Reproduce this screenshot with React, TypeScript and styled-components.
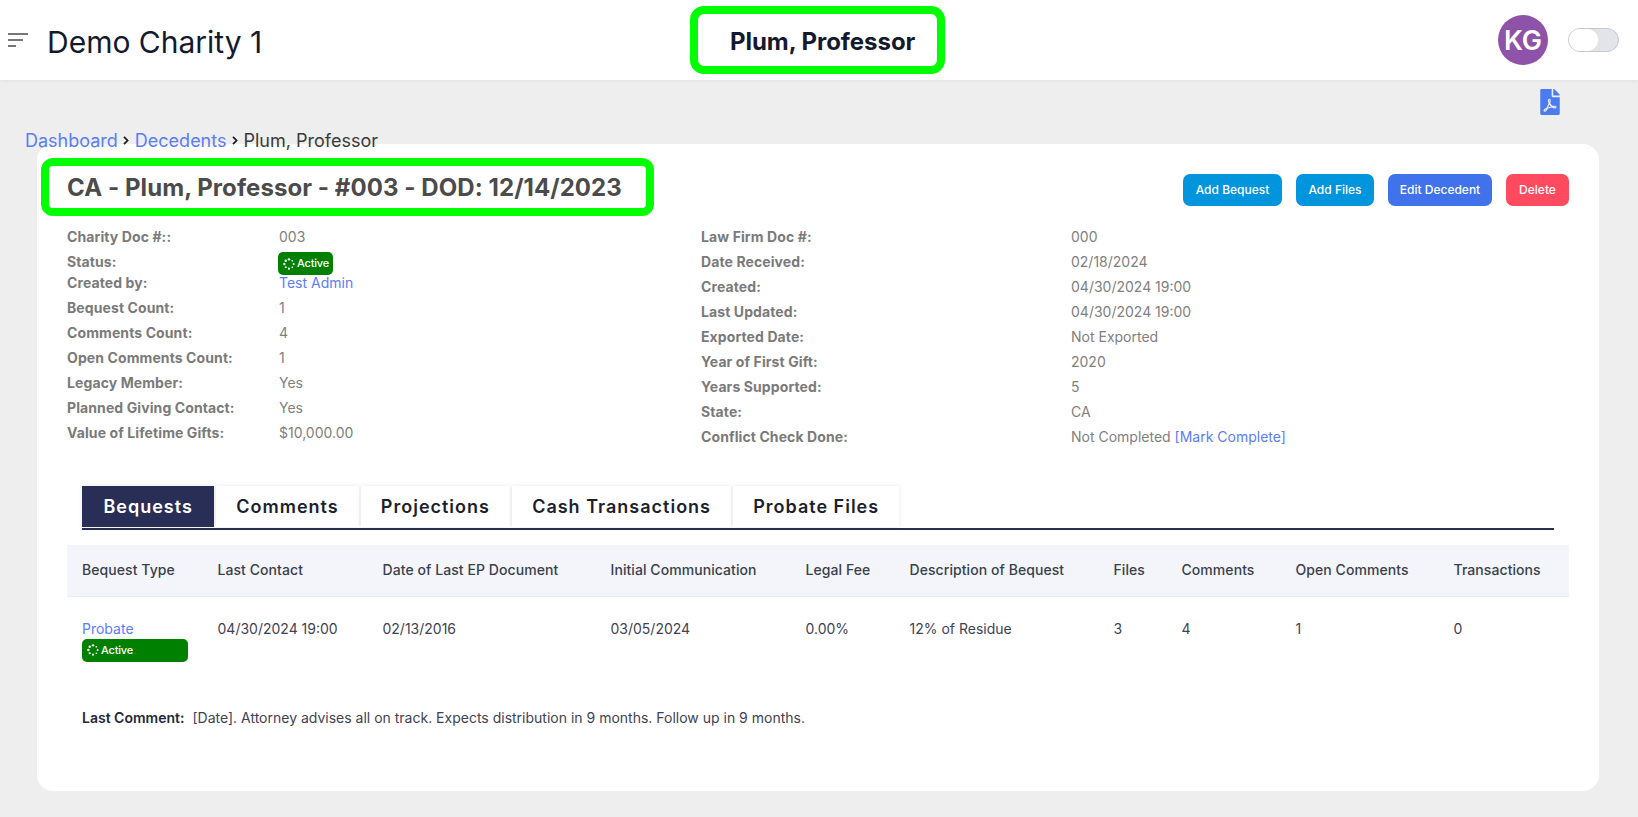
import React from "react";
import styled, { createGlobalStyle } from "styled-components";
import { FaFilePdf } from "react-icons/fa";

const GlobalStyle = createGlobalStyle`
  html, body {
    margin: 0;
    padding: 0;
    background: #eeeeee;
    font-family: Inter, "Liberation Sans", sans-serif;
  }
  * { box-sizing: border-box; }
`;

const Page = styled.div`
  width: 1638px;
  height: 817px;
  overflow: hidden;
`;

const TopBar = styled.header`
  height: 80px;
  background: #fff;
  box-shadow: 0 1px 4px rgba(0, 0, 0, 0.06);
  display: grid;
  grid-template-columns: 690px 255px 1fr;
  align-items: center;
`;

const Brand = styled.div`
  display: flex;
  align-items: center;
  gap: 19px;
  padding-left: 8px;
`;

const BrandName = styled.div`
  padding-top: 3px;
  font-size: 30px;
  font-weight: 400;
  color: #141a2e;
`;

const Highlight = styled.div`
  border: 8px solid #00ff00;
  border-radius: 14px;
  background: #fff;
`;

const PatientName = styled(Highlight)`
  height: 68px;
  display: flex;
  align-items: center;
  padding: 2px 0 0 32px;
  font-size: 24px;
  font-weight: 700;
  letter-spacing: -0.05px;
  color: #141a2e;
`;

const UserArea = styled.div`
  display: flex;
  justify-content: flex-end;
  align-items: center;
  gap: 20px;
  padding-right: 19px;
`;

const Avatar = styled.div`
  width: 50px;
  height: 50px;
  border-radius: 50%;
  background: #8e53a8;
  color: #fff;
  font-size: 27px;
  font-weight: 600;
  display: flex;
  align-items: center;
  justify-content: center;
`;

const Toggle = styled.div`
  width: 51px;
  height: 24px;
  border-radius: 12px;
  background: #e2e4e9;
  border: 1px solid #c5c8cf;
`;

const ToggleKnob = styled.div`
  width: 29px;
  height: 22px;
  border-radius: 11px;
  background: #fff;
`;

const PdfRow = styled.div`
  display: flex;
  justify-content: flex-end;
  padding: 9px 75px 0 0;
  height: 50px;
  color: #4a7cf0;
`;

const Crumbs = styled.div`
  position: relative;
  z-index: 2;
  height: 21px;
  padding-left: 25px;
  font-size: 18px;
  line-height: 21px;
  color: #3a3a3a;
  display: flex;
  align-items: center;
  gap: 5.5px;
`;

const CrumbLink = styled.a`
  color: #5b7df5;
`;

const Card = styled.main`
  margin: -7px 39px 0 37px;
  height: 647px;
  background: #fff;
  border-radius: 16px;
  padding: 14px 30px 0 30px;
`;

const CardHead = styled.div`
  display: flex;
  justify-content: space-between;
  align-items: flex-start;
`;

const TitleBox = styled(Highlight)`
  margin-left: -26px;
  width: 613px;
  height: 58px;
  border-radius: 12px;
  display: flex;
  align-items: center;
  padding-left: 18px;
  font-size: 24px;
  font-weight: 700;
  letter-spacing: 0.07px;
  color: #4b4b4b;
`;

const Actions = styled.div`
  display: flex;
  gap: 14px;
  padding-top: 16px;
`;

const ActionButton = styled.button<{ $bg: string; $width: number }>`
  height: 32px;
  padding: 0 0 2px;
  width: ${(p) => p.$width}px;
  border: 0;
  border-radius: 7px;
  background: ${(p) => p.$bg};
  color: #fff;
  font-family: inherit;
  font-size: 12px;
  font-weight: 500;
`;

const Details = styled.div`
  display: grid;
  grid-template-columns: 634px 1fr;
  margin-top: 8px;
  font-size: 14px;
  line-height: 25px;
`;

const DetailColumn = styled.div<{ $labelWidth: number; $rows?: string }>`
  display: grid;
  grid-template-columns: ${(p) => p.$labelWidth}px 1fr;
  grid-template-rows: ${(p) => p.$rows || "none"};
  grid-auto-rows: 25px;
  align-items: start;
`;

const Label = styled.div`
  font-weight: 700;
  letter-spacing: 0.1px;
  color: #7a7a7a;
`;

const Value = styled.div`
  color: #808080;
`;

const TextLink = styled.a`
  color: #5b7df5;
`;

const Badge = styled.div<{ $wide?: boolean }>`
  display: flex;
  align-items: center;
  gap: 2px;
  height: 23px;
  width: ${(p) => (p.$wide ? "106px" : "55px")};
  margin: ${(p) => (p.$wide ? "2px 0 0" : "3px 0 0 -1px")};
  padding: 0 5px;
  border-radius: 5px;
  background: #008000;
  color: #fff;
  font-size: 11px;
  font-weight: 500;
  letter-spacing: -0.2px;
  line-height: 23px;

  svg {
    flex-shrink: 0;
  }
`;

const Tabs = styled.div`
  display: flex;
  gap: 2px;
  margin: 37px 15px 0;
  height: 44px;
  border-bottom: 2px solid #282e55;
`;

const Tab = styled.div<{ $active?: boolean }>`
  height: 41px;
  padding: 0 ${(p) => (p.$active ? "21.4px" : "20.1px")};
  display: flex;
  align-items: center;
  font-size: 18px;
  font-weight: 600;
  letter-spacing: 1px;
  background: ${(p) => (p.$active ? "#282e55" : "#fff")};
  color: ${(p) => (p.$active ? "#fff" : "#1b1f2e")};
  box-shadow: 0 0 5px rgba(0, 0, 0, 0.09);
`;

const Table = styled.table`
  width: 1502px;
  margin-top: 15px;
  border-collapse: collapse;
  table-layout: fixed;
  font-size: 14px;
`;

const HeadCell = styled.th`
  height: 51px;
  padding: 0 0 2px 15px;
  background: #f3f5fa;
  border-bottom: 1px solid #e9ebf2;
  text-align: left;
  font-weight: 500;
  letter-spacing: 0.07px;
  color: #3a3f4c;
`;

const BodyCell = styled.td`
  height: 90px;
  padding: 23px 0 0 15px;
  vertical-align: top;
  color: #3f4254;
`;

const LastComment = styled.div`
  margin: 23px 0 0 15px;
  font-size: 14px;
  color: #3f4254;
`;

const LastCommentLabel = styled.span`
  font-weight: 600;
  color: #23273a;
  margin-right: 8px;
`;

const Spinner = () => (
  <svg width="12" height="12" viewBox="0 0 14 14" fill="#fff">
    <circle cx="7" cy="1.6" r="1.4" />
    <circle cx="10.9" cy="3.2" r="1" />
    <circle cx="12.4" cy="7" r="1.2" />
    <circle cx="10.9" cy="10.8" r="1" />
    <circle cx="7" cy="12.4" r="1.3" />
    <circle cx="3.2" cy="10.8" r="1.3" />
    <circle cx="1.6" cy="7" r="1.4" />
    <circle cx="3.2" cy="3.2" r="1.4" />
  </svg>
);

const MenuIcon = () => (
  <svg width="20" height="14" viewBox="0 0 20 14" stroke="#777" strokeWidth="2">
    <path d="M0 1h20M0 7h15M0 13h8" />
  </svg>
);

const CrumbChevron = () => (
  <svg width="6" height="9" viewBox="0 0 6 9" fill="none" stroke="#1a1a1a" strokeWidth="1.7">
    <path d="M1 .8l3.6 3.7L1 8.2" />
  </svg>
);

const leftRows: [string, React.ReactNode][] = [
  ["Bequest Count:", "1"],
  ["Comments Count:", "4"],
  ["Open Comments Count:", "1"],
  ["Legacy Member:", "Yes"],
  ["Planned Giving Contact:", "Yes"],
  ["Value of Lifetime Gifts:", "$10,000.00"],
];

const rightRows: [string, React.ReactNode][] = [
  ["Law Firm Doc #:", "000"],
  ["Date Received:", "02/18/2024"],
  ["Created:", "04/30/2024 19:00"],
  ["Last Updated:", "04/30/2024 19:00"],
  ["Exported Date:", "Not Exported"],
  ["Year of First Gift:", "2020"],
  ["Years Supported:", "5"],
  ["State:", "CA"],
  [
    "Conflict Check Done:",
    <>
      Not Completed <TextLink>[Mark Complete]</TextLink>
    </>,
  ],
];

const columns: [string, number][] = [
  ["Bequest Type", 135.5],
  ["Last Contact", 165],
  ["Date of Last EP Document", 228],
  ["Initial Communication", 195],
  ["Legal Fee", 104],
  ["Description of Bequest", 204],
  ["Files", 68],
  ["Comments", 114],
  ["Open Comments", 158],
  ["Transactions", 130.5],
];

const tabs = ["Bequests", "Comments", "Projections", "Cash Transactions", "Probate Files"];

export default function App() {
  return (
    <Page>
      <GlobalStyle />
      <TopBar>
        <Brand>
          <MenuIcon />
          <BrandName>Demo Charity 1</BrandName>
        </Brand>
        <PatientName>Plum, Professor</PatientName>
        <UserArea>
          <Avatar>KG</Avatar>
          <Toggle>
            <ToggleKnob />
          </Toggle>
        </UserArea>
      </TopBar>
      <PdfRow>
        <FaFilePdf size={26} />
      </PdfRow>
      <Crumbs>
        <CrumbLink>Dashboard</CrumbLink>
        <CrumbChevron />
        <CrumbLink>Decedents</CrumbLink>
        <CrumbChevron />
        <span>Plum, Professor</span>
      </Crumbs>
      <Card>
        <CardHead>
          <TitleBox>CA - Plum, Professor - #003 - DOD: 12/14/2023</TitleBox>
          <Actions>
            <ActionButton $bg="#0095dc" $width={99}>Add Bequest</ActionButton>
            <ActionButton $bg="#0095dc" $width={78}>Add Files</ActionButton>
            <ActionButton $bg="#3f72eb" $width={104}>Edit Decedent</ActionButton>
            <ActionButton $bg="#ff4a5f" $width={63}>Delete</ActionButton>
          </Actions>
        </CardHead>
        <Details>
          <DetailColumn $labelWidth={212} $rows="25px 21px">
            <Label>Charity Doc #::</Label>
            <Value>003</Value>
            <Label>Status:</Label>
            <Value>
              <Badge>
                <Spinner />
                Active
              </Badge>
            </Value>
            <Label>Created by:</Label>
            <Value>
              <TextLink>Test Admin</TextLink>
            </Value>
            {leftRows.map(([label, value]) => (
              <React.Fragment key={label}>
                <Label>{label}</Label>
                <Value>{value}</Value>
              </React.Fragment>
            ))}
          </DetailColumn>
          <DetailColumn $labelWidth={370}>
            {rightRows.map(([label, value]) => (
              <React.Fragment key={label}>
                <Label>{label}</Label>
                <Value>{value}</Value>
              </React.Fragment>
            ))}
          </DetailColumn>
        </Details>
        <Tabs>
          {tabs.map((t, i) => (
            <Tab key={t} $active={i === 0}>
              {t}
            </Tab>
          ))}
        </Tabs>
        <Table>
          <colgroup>
            {columns.map(([name, w]) => (
              <col key={name} width={w} />
            ))}
          </colgroup>
          <thead>
            <tr>
              {columns.map(([name]) => (
                <HeadCell key={name}>{name}</HeadCell>
              ))}
            </tr>
          </thead>
          <tbody>
            <tr>
              <BodyCell>
                <TextLink>Probate</TextLink>
                <Badge $wide>
                  <Spinner />
                  Active
                </Badge>
              </BodyCell>
              <BodyCell>04/30/2024 19:00</BodyCell>
              <BodyCell>02/13/2016</BodyCell>
              <BodyCell>03/05/2024</BodyCell>
              <BodyCell>0.00%</BodyCell>
              <BodyCell>12% of Residue</BodyCell>
              <BodyCell>3</BodyCell>
              <BodyCell>4</BodyCell>
              <BodyCell>1</BodyCell>
              <BodyCell>0</BodyCell>
            </tr>
          </tbody>
        </Table>
        <LastComment>
          <LastCommentLabel>Last Comment:</LastCommentLabel>
          [Date]. Attorney advises all on track. Expects distribution in 9 months. Follow up in 9 months.
        </LastComment>
      </Card>
    </Page>
  );
}
